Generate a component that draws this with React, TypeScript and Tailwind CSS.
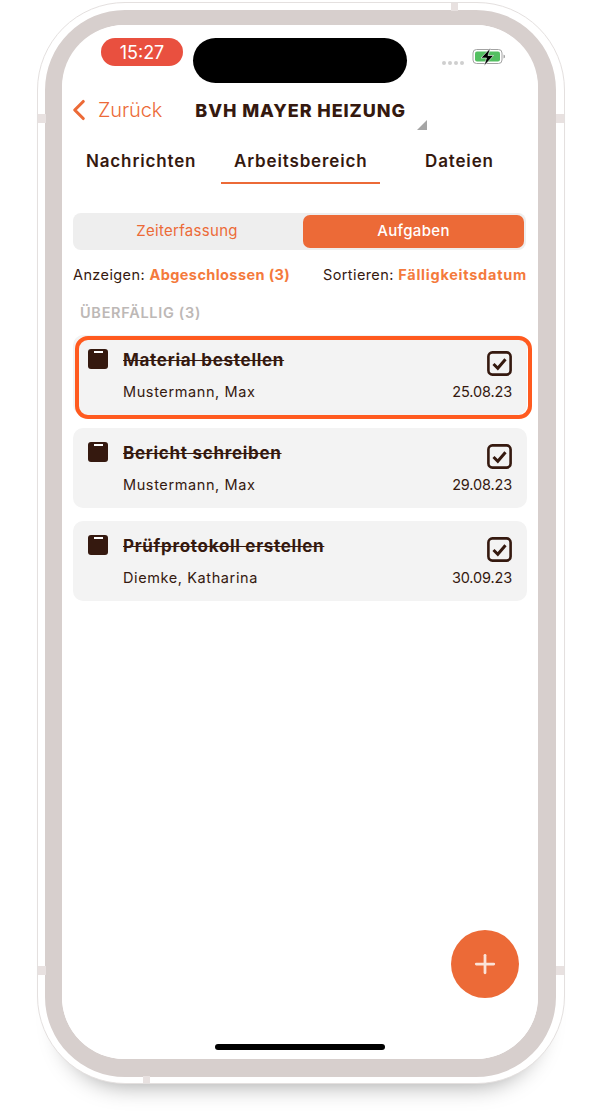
import React from "react";
import { ChevronLeft, Plus } from "lucide-react";

const tasks = [
  { title: "Material bestellen", name: "Mustermann, Max", date: "25.08.23", active: true },
  { title: "Bericht schreiben", name: "Mustermann, Max", date: "29.08.23" },
  { title: "Prüfprotokoll erstellen", name: "Diemke, Katharina", date: "30.09.23" },
];

const TaskCard: React.FC<{ title: string; name: string; date: string; active?: boolean }> = ({
  title,
  name,
  date,
  active,
}) => (
  <div className="relative h-[80px] rounded-[10px] bg-[#f3f3f3] pl-[15px] pr-[15px] pt-[15px]">
    {active && (
      <div className="absolute left-[2px] right-[-5px] top-[1px] bottom-[-4px] rounded-[13px] border-[4px] border-[#ff5a1f]" />
    )}
    <div className="flex items-start">
      <div className="relative mt-[-1px] h-[20px] w-[20px] rounded-[3px] bg-[#35190f]">
        <div className="absolute left-[6px] top-[2px] h-[2px] w-[9px] bg-white" />
      </div>
      <div className="ml-[15px] text-[17px] leading-[20px] font-bold tracking-[0.7px] text-[#35190f] line-through">
        {title}
      </div>
      <svg width="25" height="25" viewBox="0 0 25 25" className="ml-auto mt-[1px]" fill="none">
        <rect x="1.4" y="1.4" width="22.2" height="22.2" rx="4" stroke="#35190f" strokeWidth="2.6" />
        <path d="M6.5 13 L10.8 17.2 L18.5 8.2" stroke="#35190f" strokeWidth="3" />
      </svg>
    </div>
    <div className="mt-[6px] flex items-center justify-between pl-[35px] text-[14.5px] leading-[20px] tracking-[0.6px] text-[#35190f]">
      <span>{name}</span>
      <span className="tracking-[-0.15px]">{date}</span>
    </div>
  </div>
);

const Notch: React.FC<{ className: string }> = ({ className }) => (
  <div className={`absolute bg-[#e8e1e0] ${className}`} />
);

const App: React.FC = () => {
  return (
    <div className="h-[1111px] w-[602px] overflow-hidden bg-white pl-[37px] pt-[2px] font-['Inter',sans-serif]">
      <div className="relative h-[1082px] w-[528px] rounded-[88px] border border-[#e4e0df] bg-white pb-[6px] pl-[7px] pr-[8px] pt-[7px] shadow-[0_26px_24px_-26px_rgba(0,0,0,0.4)]">
        <Notch className="left-[413px] top-0 h-[8px] w-[7px]" />
        <Notch className="left-0 top-[111px] h-[9px] w-[8px]" />
        <Notch className="right-0 top-[111px] h-[9px] w-[8px]" />
        <Notch className="left-0 top-[963px] h-[9px] w-[8px]" />
        <Notch className="right-0 top-[963px] h-[9px] w-[8px]" />
        <Notch className="bottom-0 left-[105px] h-[7px] w-[7px]" />

        <div className="h-full w-full rounded-[80px] border-b-[18px] border-l-[17px] border-r-[18px] border-t-[15px] border-[#d7cfcd]">
          <div className="relative flex h-full w-full flex-col rounded-[62px] bg-white">
            {/* status bar */}
            <div className="mt-[13px] flex h-[45px] items-start pl-[39px]">
              <div className="flex h-[28px] w-[82px] items-center justify-center rounded-[14px] bg-[#e9503f] text-[18px] text-white">
                15:27
              </div>
              <div className="ml-[10px] h-[45px] w-[214px] rounded-[23px] bg-black" />
              <div className="ml-[35px] mt-[23px] flex gap-[2px]">
                <span className="h-[4px] w-[4px] rounded-full bg-[#cfcfcf]" />
                <span className="h-[4px] w-[4px] rounded-full bg-[#cfcfcf]" />
                <span className="h-[4px] w-[4px] rounded-full bg-[#cfcfcf]" />
                <span className="h-[4px] w-[4px] rounded-full bg-[#cfcfcf]" />
              </div>
              <svg width="34" height="18" viewBox="0 0 34 18" className="ml-[8px] mt-[10px]">
                <rect x="1" y="1.5" width="29" height="14" rx="3.5" fill="white" stroke="#a3a3a3" />
                <rect x="3" y="3.5" width="25" height="10" rx="2" fill="#53bf61" />
                <path d="M31.5 6.5 L33 7.5 V9.5 L31.5 10.5 Z" fill="#a3a3a3" />
                <path d="M18.5 0 L9 10 H14.5 L12 18 L21.5 7.5 H16 Z" fill="black" stroke="white" strokeWidth="0.6" />
              </svg>
            </div>

            {/* header */}
            <div className="relative mt-[13px] flex h-[28px] items-center">
              <ChevronLeft size={34} strokeWidth={2.2} className="text-[#ec6a37]" />
              <span className="ml-[2px] text-[20px] font-light tracking-[-0.1px] text-[#ec6a37]">Zurück</span>
              <span className="ml-[33px] text-[18px] font-extrabold tracking-[0.9px] text-[#35190f]">
                BVH MAYER HEIZUNG
              </span>
              <svg width="10" height="10" viewBox="0 0 10 10" className="absolute left-[355px] top-[24px]">
                <path d="M10 0 V10 H0 Z" fill="#a5a5a5" />
              </svg>
            </div>

            {/* tabs */}
            <div className="mt-[26px] flex pl-[24px] text-[17px] leading-[20px] font-semibold tracking-[0.85px] text-[#35190f]">
              <span className="w-[135px] whitespace-nowrap pt-[1px]">Nachrichten</span>
              <div className="relative h-[34px] w-[159px] border-b-2 border-[#ec6a37]">
                <span className="absolute left-[13px] whitespace-nowrap pt-[1px]">Arbeitsbereich</span>
              </div>
              <span className="ml-[45px] pt-[1px]">Dateien</span>
            </div>

            {/* content */}
            <div className="mt-[29px] px-[11px]">
              <div className="flex h-[37px] w-[453px] items-center rounded-[8px] bg-[#eeeeee] text-[15px]">
                <div className="w-[228px] text-center tracking-[0.3px] text-[#ec6a37]">Zeiterfassung</div>
                <div className="ml-[2px] flex h-[33px] w-[221px] items-center justify-center rounded-[7px] bg-[#ec6a37] font-medium tracking-[0.35px] text-white">
                  Aufgaben
                </div>
              </div>

              <div className="mt-[15px] flex w-[454px] items-center justify-between text-[14.5px] leading-[20px] tracking-[0.4px] text-[#35190f]">
                <span>
                  Anzeigen: <b className="font-bold text-[#f47a3c]">Abgeschlossen (3)</b>
                </span>
                <span>
                  Sortieren: <b className="font-bold tracking-[0.75px] text-[#f47a3c]">Fälligkeitsdatum</b>
                </span>
              </div>

              <div className="mt-[18px] pl-[7px] text-[14.5px] leading-[20px] font-semibold tracking-[0.7px] text-[#bdb8b6]">
                ÜBERFÄLLIG (3)
              </div>

              <div className="mt-[12px] flex w-[454px] flex-col gap-[13px]">
                {tasks.map((t) => (
                  <TaskCard key={t.title} {...t} />
                ))}
              </div>
            </div>

            {/* home indicator */}
            <div className="mx-auto mb-[9px] mt-auto h-[6px] w-[170px] rounded-full bg-black" />

            <button className="absolute bottom-[61px] right-[19px] flex h-[68px] w-[68px] items-center justify-center rounded-full bg-[#ec6a37]">
              <Plus size={30} strokeWidth={2.2} className="text-[#fbe3d8]" />
            </button>
          </div>
        </div>
      </div>
    </div>
  );
};

export default App;
